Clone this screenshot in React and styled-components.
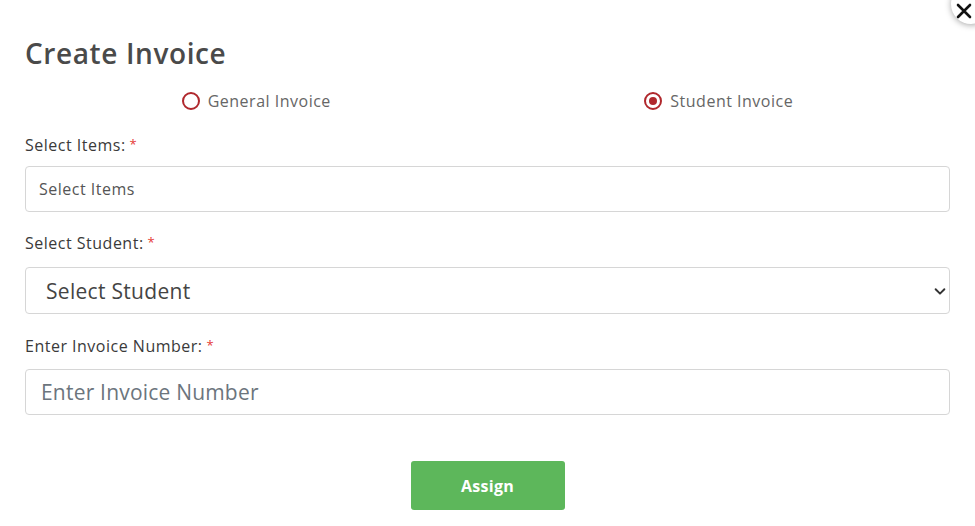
import React from "react";
import styled, { createGlobalStyle } from "styled-components";

const Global = createGlobalStyle`
  html, body { margin: 0; padding: 0; background: #fff; }
  body { font-family: "Open Sans", "Noto Sans", sans-serif; color: #444; }
  * { box-sizing: border-box; }
`;

const Modal = styled.div`
  position: relative;
  width: 975px;
  height: 526px;
  overflow: hidden;
  padding: 33px 25px 0 25px;
  background: #fff;
`;

const Close = styled.button`
  position: absolute;
  top: -16px;
  right: -16px;
  width: 40px;
  height: 40px;
  border-radius: 50%;
  border: none;
  background: #fff;
  box-shadow: 0 1px 6px rgba(0, 0, 0, 0.35);
  display: flex;
  align-items: center;
  justify-content: center;
  padding: 14px 14px 0 0;
  cursor: pointer;
`;

const Title = styled.h2`
  margin: 0;
  font-size: 28px;
  line-height: 40px;
  font-weight: 600;
  color: #4a4a4a;
  letter-spacing: 0.6px;
`;

const RadioRow = styled.div`
  display: grid;
  grid-template-columns: 1fr 1fr;
  margin-top: 14px;
  height: 28px;
`;

const RadioOption = styled.label`
  display: flex;
  align-items: center;
  justify-content: center;
  gap: 8px;
  font-size: 16px;
  letter-spacing: 0.5px;
  color: #666;
  cursor: pointer;
`;

const RadioCircle = styled.span`
  width: 18px;
  height: 18px;
  border-radius: 50%;
  border: 2px solid #b0282d;
  display: flex;
  align-items: center;
  justify-content: center;
  &::after {
    content: "";
    width: 8px;
    height: 8px;
    border-radius: 50%;
    background: ${(p) => (p.$checked ? "#b0282d" : "transparent")};
  }
`;

const Field = styled.div`
  margin-top: ${(p) => p.$top}px;
`;

const Label = styled.div`
  font-size: 16px;
  letter-spacing: 0.5px;
  line-height: 20px;
  color: #3a3a3a;
  margin-bottom: ${(p) => p.$gap ?? 13}px;
`;

const Req = styled.span`
  color: #e53935;
  font-size: 13px;
  margin-left: 4px;
  vertical-align: 2px;
`;

const Input = styled.input`
  display: block;
  width: 100%;
  height: 46px;
  border: 1px solid #d6d6d6;
  border-radius: 4px;
  font-family: inherit;
  font-size: ${(p) => p.$size}px;
  letter-spacing: ${(p) => p.$ls}px;
  padding: 0 ${(p) => p.$pad}px;
  color: #555;
  outline: none;
  &::placeholder { color: ${(p) => p.$ph}; }
`;

const SelectWrap = styled.div`
  position: relative;
`;

const Select = styled.select`
  display: block;
  width: 100%;
  height: 47px;
  appearance: none;
  border: 1px solid #d6d6d6;
  border-radius: 4px;
  background: #fff;
  font-family: inherit;
  font-size: 21px;
  letter-spacing: 0.3px;
  color: #444;
  padding: 0 40px 0 20px;
  outline: none;
`;

const Chevron = styled.svg`
  position: absolute;
  right: 3px;
  top: 17px;
  pointer-events: none;
`;

const Actions = styled.div`
  display: flex;
  justify-content: center;
  margin-top: 46px;
`;

const Button = styled.button`
  width: 154px;
  height: 49px;
  background: #5db75b;
  border: none;
  border-radius: 3px;
  color: #fff;
  font-family: inherit;
  font-weight: 700;
  font-size: 16px;
  letter-spacing: 0.3px;
  cursor: pointer;
`;

export default function App() {
  return (
    <>
      <Global />
      <Modal>
        <Close aria-label="close">
          <svg width="16" height="16" viewBox="0 0 16 16">
            <path d="M2 2L14 14M14 2L2 14" stroke="#111" strokeWidth="2.6" strokeLinecap="round" />
          </svg>
        </Close>
        <Title>Create Invoice</Title>
        <RadioRow>
          <RadioOption>
            <RadioCircle />
            General Invoice
          </RadioOption>
          <RadioOption>
            <RadioCircle $checked />
            Student Invoice
          </RadioOption>
        </RadioRow>
        <Field $top={19}>
          <Label $gap={11}>
            Select Items:<Req>*</Req>
          </Label>
          <Input placeholder="Select Items" $size={16} $ls={0.5} $pad={13} $ph="#555" />
        </Field>
        <Field $top={20}>
          <Label $gap={14}>
            Select Student:<Req>*</Req>
          </Label>
          <SelectWrap>
            <Select defaultValue="">
              <option value="">Select Student</option>
            </Select>
            <Chevron width="14" height="14" viewBox="0 0 16 16">
              <path d="M3 6l5 5 5-5" fill="none" stroke="#333" strokeWidth="2.2" strokeLinecap="round" strokeLinejoin="round" />
            </Chevron>
          </SelectWrap>
        </Field>
        <Field $top={21}>
          <Label>
            Enter Invoice Number:<Req>*</Req>
          </Label>
          <Input placeholder="Enter Invoice Number" $size={21} $ls={0.2} $pad={15} $ph="#6c757d" />
        </Field>
        <Actions>
          <Button>Assign</Button>
        </Actions>
      </Modal>
    </>
  );
}
